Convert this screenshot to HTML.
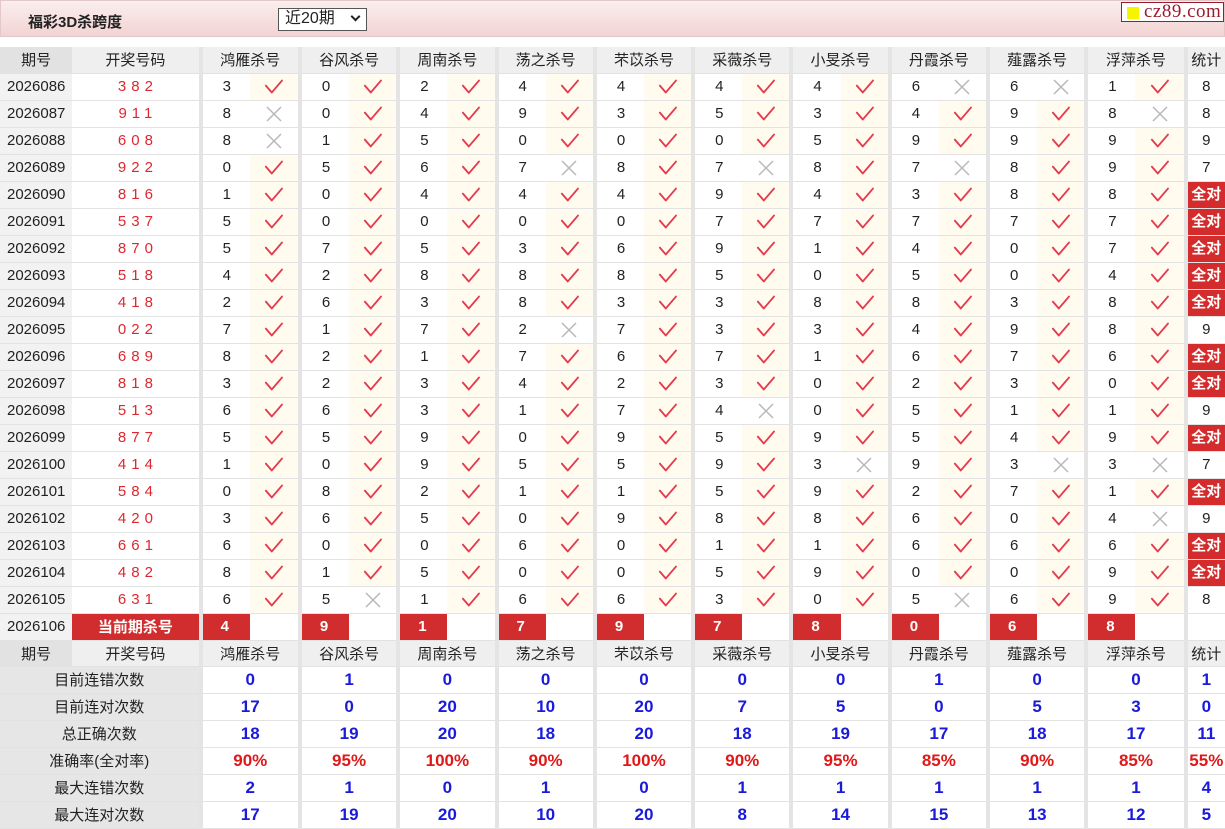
<!DOCTYPE html>
<html><head><meta charset="utf-8">
<style>
*{margin:0;padding:0;box-sizing:border-box}
body{width:1225px;height:828px;overflow:hidden;background:#fff;font-family:"Liberation Sans","Noto Sans CJK SC",sans-serif;font-size:15px;color:#222;position:relative}
.bar{position:absolute;left:0;top:0;width:1225px;height:37px;background:linear-gradient(#fbeeee,#f3d3d3);border:1px solid #e4c8c8}
.bar .t{position:absolute;left:27px;top:10px;font-weight:bold;font-size:15px;color:#222}
.bar .sel{position:absolute;left:277px;top:7px;width:89px;height:23px;border:1px solid #555;background:#fff;font-size:16px;padding-left:6px;line-height:20px}
.bar .sel i{position:absolute;right:7px;top:4px;width:7px;height:7px;border-right:2px solid #222;border-bottom:2px solid #222;transform:rotate(45deg)}
.logo{position:absolute;left:1120px;top:1px;width:103px;height:20px;border:1px solid #9b1c2c;background:#fff;font-family:"Liberation Serif",serif;font-size:19px;color:#9b1c2c;line-height:18px;padding-left:22px;letter-spacing:0.5px}
.logo b{position:absolute;left:5px;top:4px;width:12px;height:12px;background:#f5f500}
table{position:absolute;left:0;top:47px;border-collapse:collapse;table-layout:fixed;width:1225px}
td{height:27px;border-bottom:1px solid #e2e2e2;text-align:center;white-space:nowrap;overflow:hidden;padding:0}
tr.h td{height:26px;background:#efefef;font-size:15px;color:#222}
tr.h td.p{background:#e2e2e2}
td.p{background:#f2f2f2;text-align:left;padding-left:7px;font-size:15px}
tr.h td.p{text-align:center;padding:0}
td.c{color:#e0262e;letter-spacing:5px;padding-left:5px;font-size:15px}
td.n{text-align:left;padding-left:20px;border-left:4px solid #e4e4e4}
td.g{border-left:4px solid #e4e4e4}
td.y{background:#fffbee}
td.s{border-left:4px solid #e4e4e4}
td.q{border-left:4px solid #e4e4e4;background:#fff;padding:0}
td.q span{display:block;background:#d42c2c;color:#fff;font-weight:bold;height:26px;line-height:26px;font-size:15px}
svg{display:block;margin:0 auto}
tr.k td.r{background:#d12d2e;color:#fff;font-weight:bold}
tr.k td.n.r{padding-left:18px}
td.l{background:#e6e6e6;font-size:15px}
tr.st td.v{font-weight:bold;color:#1a1adb;font-size:17px;border-left:4px solid #e4e4e4}
tr.st td.v.red{color:#e01818}
</style></head><body>
<svg width="0" height="0" style="position:absolute"><defs>
<symbol id="y" viewBox="0 0 24 20"><path d="M3 9 L10 17 L22 3" fill="none" stroke="#e53a4e" stroke-width="2.2" stroke-linecap="round" stroke-linejoin="round"/></symbol>
<symbol id="x" viewBox="0 0 20 20"><path d="M3 3 L17 17 M17 3 L3 17" fill="none" stroke="#b8b8b8" stroke-width="1.5"/></symbol>
</defs></svg>
<div class="bar"><span class="t">福彩3D杀跨度</span><div class="sel">近20期<i></i></div><div class="logo"><b></b>cz89.com</div></div>
<table>
<colgroup><col style="width:72px"><col style="width:128px"><col style="width:49px"><col style="width:50px"><col style="width:49px"><col style="width:49px"><col style="width:49px"><col style="width:49px"><col style="width:49px"><col style="width:49px"><col style="width:49px"><col style="width:49px"><col style="width:49px"><col style="width:49px"><col style="width:49px"><col style="width:49px"><col style="width:49px"><col style="width:49px"><col style="width:49px"><col style="width:49px"><col style="width:49px"><col style="width:50px"><col style="width:39px"></colgroup>
<tr class="h"><td class="p">期号</td><td>开奖号码</td><td colspan="2" class="g">鸿雁杀号</td><td colspan="2" class="g">谷风杀号</td><td colspan="2" class="g">周南杀号</td><td colspan="2" class="g">荡之杀号</td><td colspan="2" class="g">芣苡杀号</td><td colspan="2" class="g">采薇杀号</td><td colspan="2" class="g">小旻杀号</td><td colspan="2" class="g">丹霞杀号</td><td colspan="2" class="g">薤露杀号</td><td colspan="2" class="g">浮萍杀号</td><td class="g">统计</td></tr>
<tr><td class="p">2026086</td><td class="c">382</td><td class="n">3</td><td class="y"><svg width="21" height="17"><use href="#y"/></svg></td><td class="n">0</td><td class="y"><svg width="21" height="17"><use href="#y"/></svg></td><td class="n">2</td><td class="y"><svg width="21" height="17"><use href="#y"/></svg></td><td class="n">4</td><td class="y"><svg width="21" height="17"><use href="#y"/></svg></td><td class="n">4</td><td class="y"><svg width="21" height="17"><use href="#y"/></svg></td><td class="n">4</td><td class="y"><svg width="21" height="17"><use href="#y"/></svg></td><td class="n">4</td><td class="y"><svg width="21" height="17"><use href="#y"/></svg></td><td class="n">6</td><td><svg width="20" height="20"><use href="#x"/></svg></td><td class="n">6</td><td><svg width="20" height="20"><use href="#x"/></svg></td><td class="n">1</td><td class="y"><svg width="21" height="17"><use href="#y"/></svg></td><td class="s">8</td></tr>
<tr><td class="p">2026087</td><td class="c">911</td><td class="n">8</td><td><svg width="20" height="20"><use href="#x"/></svg></td><td class="n">0</td><td class="y"><svg width="21" height="17"><use href="#y"/></svg></td><td class="n">4</td><td class="y"><svg width="21" height="17"><use href="#y"/></svg></td><td class="n">9</td><td class="y"><svg width="21" height="17"><use href="#y"/></svg></td><td class="n">3</td><td class="y"><svg width="21" height="17"><use href="#y"/></svg></td><td class="n">5</td><td class="y"><svg width="21" height="17"><use href="#y"/></svg></td><td class="n">3</td><td class="y"><svg width="21" height="17"><use href="#y"/></svg></td><td class="n">4</td><td class="y"><svg width="21" height="17"><use href="#y"/></svg></td><td class="n">9</td><td class="y"><svg width="21" height="17"><use href="#y"/></svg></td><td class="n">8</td><td><svg width="20" height="20"><use href="#x"/></svg></td><td class="s">8</td></tr>
<tr><td class="p">2026088</td><td class="c">608</td><td class="n">8</td><td><svg width="20" height="20"><use href="#x"/></svg></td><td class="n">1</td><td class="y"><svg width="21" height="17"><use href="#y"/></svg></td><td class="n">5</td><td class="y"><svg width="21" height="17"><use href="#y"/></svg></td><td class="n">0</td><td class="y"><svg width="21" height="17"><use href="#y"/></svg></td><td class="n">0</td><td class="y"><svg width="21" height="17"><use href="#y"/></svg></td><td class="n">0</td><td class="y"><svg width="21" height="17"><use href="#y"/></svg></td><td class="n">5</td><td class="y"><svg width="21" height="17"><use href="#y"/></svg></td><td class="n">9</td><td class="y"><svg width="21" height="17"><use href="#y"/></svg></td><td class="n">9</td><td class="y"><svg width="21" height="17"><use href="#y"/></svg></td><td class="n">9</td><td class="y"><svg width="21" height="17"><use href="#y"/></svg></td><td class="s">9</td></tr>
<tr><td class="p">2026089</td><td class="c">922</td><td class="n">0</td><td class="y"><svg width="21" height="17"><use href="#y"/></svg></td><td class="n">5</td><td class="y"><svg width="21" height="17"><use href="#y"/></svg></td><td class="n">6</td><td class="y"><svg width="21" height="17"><use href="#y"/></svg></td><td class="n">7</td><td><svg width="20" height="20"><use href="#x"/></svg></td><td class="n">8</td><td class="y"><svg width="21" height="17"><use href="#y"/></svg></td><td class="n">7</td><td><svg width="20" height="20"><use href="#x"/></svg></td><td class="n">8</td><td class="y"><svg width="21" height="17"><use href="#y"/></svg></td><td class="n">7</td><td><svg width="20" height="20"><use href="#x"/></svg></td><td class="n">8</td><td class="y"><svg width="21" height="17"><use href="#y"/></svg></td><td class="n">9</td><td class="y"><svg width="21" height="17"><use href="#y"/></svg></td><td class="s">7</td></tr>
<tr><td class="p">2026090</td><td class="c">816</td><td class="n">1</td><td class="y"><svg width="21" height="17"><use href="#y"/></svg></td><td class="n">0</td><td class="y"><svg width="21" height="17"><use href="#y"/></svg></td><td class="n">4</td><td class="y"><svg width="21" height="17"><use href="#y"/></svg></td><td class="n">4</td><td class="y"><svg width="21" height="17"><use href="#y"/></svg></td><td class="n">4</td><td class="y"><svg width="21" height="17"><use href="#y"/></svg></td><td class="n">9</td><td class="y"><svg width="21" height="17"><use href="#y"/></svg></td><td class="n">4</td><td class="y"><svg width="21" height="17"><use href="#y"/></svg></td><td class="n">3</td><td class="y"><svg width="21" height="17"><use href="#y"/></svg></td><td class="n">8</td><td class="y"><svg width="21" height="17"><use href="#y"/></svg></td><td class="n">8</td><td class="y"><svg width="21" height="17"><use href="#y"/></svg></td><td class="q"><span>全对</span></td></tr>
<tr><td class="p">2026091</td><td class="c">537</td><td class="n">5</td><td class="y"><svg width="21" height="17"><use href="#y"/></svg></td><td class="n">0</td><td class="y"><svg width="21" height="17"><use href="#y"/></svg></td><td class="n">0</td><td class="y"><svg width="21" height="17"><use href="#y"/></svg></td><td class="n">0</td><td class="y"><svg width="21" height="17"><use href="#y"/></svg></td><td class="n">0</td><td class="y"><svg width="21" height="17"><use href="#y"/></svg></td><td class="n">7</td><td class="y"><svg width="21" height="17"><use href="#y"/></svg></td><td class="n">7</td><td class="y"><svg width="21" height="17"><use href="#y"/></svg></td><td class="n">7</td><td class="y"><svg width="21" height="17"><use href="#y"/></svg></td><td class="n">7</td><td class="y"><svg width="21" height="17"><use href="#y"/></svg></td><td class="n">7</td><td class="y"><svg width="21" height="17"><use href="#y"/></svg></td><td class="q"><span>全对</span></td></tr>
<tr><td class="p">2026092</td><td class="c">870</td><td class="n">5</td><td class="y"><svg width="21" height="17"><use href="#y"/></svg></td><td class="n">7</td><td class="y"><svg width="21" height="17"><use href="#y"/></svg></td><td class="n">5</td><td class="y"><svg width="21" height="17"><use href="#y"/></svg></td><td class="n">3</td><td class="y"><svg width="21" height="17"><use href="#y"/></svg></td><td class="n">6</td><td class="y"><svg width="21" height="17"><use href="#y"/></svg></td><td class="n">9</td><td class="y"><svg width="21" height="17"><use href="#y"/></svg></td><td class="n">1</td><td class="y"><svg width="21" height="17"><use href="#y"/></svg></td><td class="n">4</td><td class="y"><svg width="21" height="17"><use href="#y"/></svg></td><td class="n">0</td><td class="y"><svg width="21" height="17"><use href="#y"/></svg></td><td class="n">7</td><td class="y"><svg width="21" height="17"><use href="#y"/></svg></td><td class="q"><span>全对</span></td></tr>
<tr><td class="p">2026093</td><td class="c">518</td><td class="n">4</td><td class="y"><svg width="21" height="17"><use href="#y"/></svg></td><td class="n">2</td><td class="y"><svg width="21" height="17"><use href="#y"/></svg></td><td class="n">8</td><td class="y"><svg width="21" height="17"><use href="#y"/></svg></td><td class="n">8</td><td class="y"><svg width="21" height="17"><use href="#y"/></svg></td><td class="n">8</td><td class="y"><svg width="21" height="17"><use href="#y"/></svg></td><td class="n">5</td><td class="y"><svg width="21" height="17"><use href="#y"/></svg></td><td class="n">0</td><td class="y"><svg width="21" height="17"><use href="#y"/></svg></td><td class="n">5</td><td class="y"><svg width="21" height="17"><use href="#y"/></svg></td><td class="n">0</td><td class="y"><svg width="21" height="17"><use href="#y"/></svg></td><td class="n">4</td><td class="y"><svg width="21" height="17"><use href="#y"/></svg></td><td class="q"><span>全对</span></td></tr>
<tr><td class="p">2026094</td><td class="c">418</td><td class="n">2</td><td class="y"><svg width="21" height="17"><use href="#y"/></svg></td><td class="n">6</td><td class="y"><svg width="21" height="17"><use href="#y"/></svg></td><td class="n">3</td><td class="y"><svg width="21" height="17"><use href="#y"/></svg></td><td class="n">8</td><td class="y"><svg width="21" height="17"><use href="#y"/></svg></td><td class="n">3</td><td class="y"><svg width="21" height="17"><use href="#y"/></svg></td><td class="n">3</td><td class="y"><svg width="21" height="17"><use href="#y"/></svg></td><td class="n">8</td><td class="y"><svg width="21" height="17"><use href="#y"/></svg></td><td class="n">8</td><td class="y"><svg width="21" height="17"><use href="#y"/></svg></td><td class="n">3</td><td class="y"><svg width="21" height="17"><use href="#y"/></svg></td><td class="n">8</td><td class="y"><svg width="21" height="17"><use href="#y"/></svg></td><td class="q"><span>全对</span></td></tr>
<tr><td class="p">2026095</td><td class="c">022</td><td class="n">7</td><td class="y"><svg width="21" height="17"><use href="#y"/></svg></td><td class="n">1</td><td class="y"><svg width="21" height="17"><use href="#y"/></svg></td><td class="n">7</td><td class="y"><svg width="21" height="17"><use href="#y"/></svg></td><td class="n">2</td><td><svg width="20" height="20"><use href="#x"/></svg></td><td class="n">7</td><td class="y"><svg width="21" height="17"><use href="#y"/></svg></td><td class="n">3</td><td class="y"><svg width="21" height="17"><use href="#y"/></svg></td><td class="n">3</td><td class="y"><svg width="21" height="17"><use href="#y"/></svg></td><td class="n">4</td><td class="y"><svg width="21" height="17"><use href="#y"/></svg></td><td class="n">9</td><td class="y"><svg width="21" height="17"><use href="#y"/></svg></td><td class="n">8</td><td class="y"><svg width="21" height="17"><use href="#y"/></svg></td><td class="s">9</td></tr>
<tr><td class="p">2026096</td><td class="c">689</td><td class="n">8</td><td class="y"><svg width="21" height="17"><use href="#y"/></svg></td><td class="n">2</td><td class="y"><svg width="21" height="17"><use href="#y"/></svg></td><td class="n">1</td><td class="y"><svg width="21" height="17"><use href="#y"/></svg></td><td class="n">7</td><td class="y"><svg width="21" height="17"><use href="#y"/></svg></td><td class="n">6</td><td class="y"><svg width="21" height="17"><use href="#y"/></svg></td><td class="n">7</td><td class="y"><svg width="21" height="17"><use href="#y"/></svg></td><td class="n">1</td><td class="y"><svg width="21" height="17"><use href="#y"/></svg></td><td class="n">6</td><td class="y"><svg width="21" height="17"><use href="#y"/></svg></td><td class="n">7</td><td class="y"><svg width="21" height="17"><use href="#y"/></svg></td><td class="n">6</td><td class="y"><svg width="21" height="17"><use href="#y"/></svg></td><td class="q"><span>全对</span></td></tr>
<tr><td class="p">2026097</td><td class="c">818</td><td class="n">3</td><td class="y"><svg width="21" height="17"><use href="#y"/></svg></td><td class="n">2</td><td class="y"><svg width="21" height="17"><use href="#y"/></svg></td><td class="n">3</td><td class="y"><svg width="21" height="17"><use href="#y"/></svg></td><td class="n">4</td><td class="y"><svg width="21" height="17"><use href="#y"/></svg></td><td class="n">2</td><td class="y"><svg width="21" height="17"><use href="#y"/></svg></td><td class="n">3</td><td class="y"><svg width="21" height="17"><use href="#y"/></svg></td><td class="n">0</td><td class="y"><svg width="21" height="17"><use href="#y"/></svg></td><td class="n">2</td><td class="y"><svg width="21" height="17"><use href="#y"/></svg></td><td class="n">3</td><td class="y"><svg width="21" height="17"><use href="#y"/></svg></td><td class="n">0</td><td class="y"><svg width="21" height="17"><use href="#y"/></svg></td><td class="q"><span>全对</span></td></tr>
<tr><td class="p">2026098</td><td class="c">513</td><td class="n">6</td><td class="y"><svg width="21" height="17"><use href="#y"/></svg></td><td class="n">6</td><td class="y"><svg width="21" height="17"><use href="#y"/></svg></td><td class="n">3</td><td class="y"><svg width="21" height="17"><use href="#y"/></svg></td><td class="n">1</td><td class="y"><svg width="21" height="17"><use href="#y"/></svg></td><td class="n">7</td><td class="y"><svg width="21" height="17"><use href="#y"/></svg></td><td class="n">4</td><td><svg width="20" height="20"><use href="#x"/></svg></td><td class="n">0</td><td class="y"><svg width="21" height="17"><use href="#y"/></svg></td><td class="n">5</td><td class="y"><svg width="21" height="17"><use href="#y"/></svg></td><td class="n">1</td><td class="y"><svg width="21" height="17"><use href="#y"/></svg></td><td class="n">1</td><td class="y"><svg width="21" height="17"><use href="#y"/></svg></td><td class="s">9</td></tr>
<tr><td class="p">2026099</td><td class="c">877</td><td class="n">5</td><td class="y"><svg width="21" height="17"><use href="#y"/></svg></td><td class="n">5</td><td class="y"><svg width="21" height="17"><use href="#y"/></svg></td><td class="n">9</td><td class="y"><svg width="21" height="17"><use href="#y"/></svg></td><td class="n">0</td><td class="y"><svg width="21" height="17"><use href="#y"/></svg></td><td class="n">9</td><td class="y"><svg width="21" height="17"><use href="#y"/></svg></td><td class="n">5</td><td class="y"><svg width="21" height="17"><use href="#y"/></svg></td><td class="n">9</td><td class="y"><svg width="21" height="17"><use href="#y"/></svg></td><td class="n">5</td><td class="y"><svg width="21" height="17"><use href="#y"/></svg></td><td class="n">4</td><td class="y"><svg width="21" height="17"><use href="#y"/></svg></td><td class="n">9</td><td class="y"><svg width="21" height="17"><use href="#y"/></svg></td><td class="q"><span>全对</span></td></tr>
<tr><td class="p">2026100</td><td class="c">414</td><td class="n">1</td><td class="y"><svg width="21" height="17"><use href="#y"/></svg></td><td class="n">0</td><td class="y"><svg width="21" height="17"><use href="#y"/></svg></td><td class="n">9</td><td class="y"><svg width="21" height="17"><use href="#y"/></svg></td><td class="n">5</td><td class="y"><svg width="21" height="17"><use href="#y"/></svg></td><td class="n">5</td><td class="y"><svg width="21" height="17"><use href="#y"/></svg></td><td class="n">9</td><td class="y"><svg width="21" height="17"><use href="#y"/></svg></td><td class="n">3</td><td><svg width="20" height="20"><use href="#x"/></svg></td><td class="n">9</td><td class="y"><svg width="21" height="17"><use href="#y"/></svg></td><td class="n">3</td><td><svg width="20" height="20"><use href="#x"/></svg></td><td class="n">3</td><td><svg width="20" height="20"><use href="#x"/></svg></td><td class="s">7</td></tr>
<tr><td class="p">2026101</td><td class="c">584</td><td class="n">0</td><td class="y"><svg width="21" height="17"><use href="#y"/></svg></td><td class="n">8</td><td class="y"><svg width="21" height="17"><use href="#y"/></svg></td><td class="n">2</td><td class="y"><svg width="21" height="17"><use href="#y"/></svg></td><td class="n">1</td><td class="y"><svg width="21" height="17"><use href="#y"/></svg></td><td class="n">1</td><td class="y"><svg width="21" height="17"><use href="#y"/></svg></td><td class="n">5</td><td class="y"><svg width="21" height="17"><use href="#y"/></svg></td><td class="n">9</td><td class="y"><svg width="21" height="17"><use href="#y"/></svg></td><td class="n">2</td><td class="y"><svg width="21" height="17"><use href="#y"/></svg></td><td class="n">7</td><td class="y"><svg width="21" height="17"><use href="#y"/></svg></td><td class="n">1</td><td class="y"><svg width="21" height="17"><use href="#y"/></svg></td><td class="q"><span>全对</span></td></tr>
<tr><td class="p">2026102</td><td class="c">420</td><td class="n">3</td><td class="y"><svg width="21" height="17"><use href="#y"/></svg></td><td class="n">6</td><td class="y"><svg width="21" height="17"><use href="#y"/></svg></td><td class="n">5</td><td class="y"><svg width="21" height="17"><use href="#y"/></svg></td><td class="n">0</td><td class="y"><svg width="21" height="17"><use href="#y"/></svg></td><td class="n">9</td><td class="y"><svg width="21" height="17"><use href="#y"/></svg></td><td class="n">8</td><td class="y"><svg width="21" height="17"><use href="#y"/></svg></td><td class="n">8</td><td class="y"><svg width="21" height="17"><use href="#y"/></svg></td><td class="n">6</td><td class="y"><svg width="21" height="17"><use href="#y"/></svg></td><td class="n">0</td><td class="y"><svg width="21" height="17"><use href="#y"/></svg></td><td class="n">4</td><td><svg width="20" height="20"><use href="#x"/></svg></td><td class="s">9</td></tr>
<tr><td class="p">2026103</td><td class="c">661</td><td class="n">6</td><td class="y"><svg width="21" height="17"><use href="#y"/></svg></td><td class="n">0</td><td class="y"><svg width="21" height="17"><use href="#y"/></svg></td><td class="n">0</td><td class="y"><svg width="21" height="17"><use href="#y"/></svg></td><td class="n">6</td><td class="y"><svg width="21" height="17"><use href="#y"/></svg></td><td class="n">0</td><td class="y"><svg width="21" height="17"><use href="#y"/></svg></td><td class="n">1</td><td class="y"><svg width="21" height="17"><use href="#y"/></svg></td><td class="n">1</td><td class="y"><svg width="21" height="17"><use href="#y"/></svg></td><td class="n">6</td><td class="y"><svg width="21" height="17"><use href="#y"/></svg></td><td class="n">6</td><td class="y"><svg width="21" height="17"><use href="#y"/></svg></td><td class="n">6</td><td class="y"><svg width="21" height="17"><use href="#y"/></svg></td><td class="q"><span>全对</span></td></tr>
<tr><td class="p">2026104</td><td class="c">482</td><td class="n">8</td><td class="y"><svg width="21" height="17"><use href="#y"/></svg></td><td class="n">1</td><td class="y"><svg width="21" height="17"><use href="#y"/></svg></td><td class="n">5</td><td class="y"><svg width="21" height="17"><use href="#y"/></svg></td><td class="n">0</td><td class="y"><svg width="21" height="17"><use href="#y"/></svg></td><td class="n">0</td><td class="y"><svg width="21" height="17"><use href="#y"/></svg></td><td class="n">5</td><td class="y"><svg width="21" height="17"><use href="#y"/></svg></td><td class="n">9</td><td class="y"><svg width="21" height="17"><use href="#y"/></svg></td><td class="n">0</td><td class="y"><svg width="21" height="17"><use href="#y"/></svg></td><td class="n">0</td><td class="y"><svg width="21" height="17"><use href="#y"/></svg></td><td class="n">9</td><td class="y"><svg width="21" height="17"><use href="#y"/></svg></td><td class="q"><span>全对</span></td></tr>
<tr><td class="p">2026105</td><td class="c">631</td><td class="n">6</td><td class="y"><svg width="21" height="17"><use href="#y"/></svg></td><td class="n">5</td><td><svg width="20" height="20"><use href="#x"/></svg></td><td class="n">1</td><td class="y"><svg width="21" height="17"><use href="#y"/></svg></td><td class="n">6</td><td class="y"><svg width="21" height="17"><use href="#y"/></svg></td><td class="n">6</td><td class="y"><svg width="21" height="17"><use href="#y"/></svg></td><td class="n">3</td><td class="y"><svg width="21" height="17"><use href="#y"/></svg></td><td class="n">0</td><td class="y"><svg width="21" height="17"><use href="#y"/></svg></td><td class="n">5</td><td><svg width="20" height="20"><use href="#x"/></svg></td><td class="n">6</td><td class="y"><svg width="21" height="17"><use href="#y"/></svg></td><td class="n">9</td><td class="y"><svg width="21" height="17"><use href="#y"/></svg></td><td class="s">8</td></tr>
<tr class="k"><td class="p">2026106</td><td class="r">当前期杀号</td><td class="n r">4</td><td></td><td class="n r">9</td><td></td><td class="n r">1</td><td></td><td class="n r">7</td><td></td><td class="n r">9</td><td></td><td class="n r">7</td><td></td><td class="n r">8</td><td></td><td class="n r">0</td><td></td><td class="n r">6</td><td></td><td class="n r">8</td><td></td><td class="s"></td></tr>
<tr class="h"><td class="p">期号</td><td>开奖号码</td><td colspan="2" class="g">鸿雁杀号</td><td colspan="2" class="g">谷风杀号</td><td colspan="2" class="g">周南杀号</td><td colspan="2" class="g">荡之杀号</td><td colspan="2" class="g">芣苡杀号</td><td colspan="2" class="g">采薇杀号</td><td colspan="2" class="g">小旻杀号</td><td colspan="2" class="g">丹霞杀号</td><td colspan="2" class="g">薤露杀号</td><td colspan="2" class="g">浮萍杀号</td><td class="g">统计</td></tr>
<tr class="st"><td colspan="2" class="l">目前连错次数</td><td colspan="2" class="v">0</td><td colspan="2" class="v">1</td><td colspan="2" class="v">0</td><td colspan="2" class="v">0</td><td colspan="2" class="v">0</td><td colspan="2" class="v">0</td><td colspan="2" class="v">0</td><td colspan="2" class="v">1</td><td colspan="2" class="v">0</td><td colspan="2" class="v">0</td><td class="v">1</td></tr>
<tr class="st"><td colspan="2" class="l">目前连对次数</td><td colspan="2" class="v">17</td><td colspan="2" class="v">0</td><td colspan="2" class="v">20</td><td colspan="2" class="v">10</td><td colspan="2" class="v">20</td><td colspan="2" class="v">7</td><td colspan="2" class="v">5</td><td colspan="2" class="v">0</td><td colspan="2" class="v">5</td><td colspan="2" class="v">3</td><td class="v">0</td></tr>
<tr class="st"><td colspan="2" class="l">总正确次数</td><td colspan="2" class="v">18</td><td colspan="2" class="v">19</td><td colspan="2" class="v">20</td><td colspan="2" class="v">18</td><td colspan="2" class="v">20</td><td colspan="2" class="v">18</td><td colspan="2" class="v">19</td><td colspan="2" class="v">17</td><td colspan="2" class="v">18</td><td colspan="2" class="v">17</td><td class="v">11</td></tr>
<tr class="st"><td colspan="2" class="l">准确率(全对率)</td><td colspan="2" class="v red">90%</td><td colspan="2" class="v red">95%</td><td colspan="2" class="v red">100%</td><td colspan="2" class="v red">90%</td><td colspan="2" class="v red">100%</td><td colspan="2" class="v red">90%</td><td colspan="2" class="v red">95%</td><td colspan="2" class="v red">85%</td><td colspan="2" class="v red">90%</td><td colspan="2" class="v red">85%</td><td class="v red">55%</td></tr>
<tr class="st"><td colspan="2" class="l">最大连错次数</td><td colspan="2" class="v">2</td><td colspan="2" class="v">1</td><td colspan="2" class="v">0</td><td colspan="2" class="v">1</td><td colspan="2" class="v">0</td><td colspan="2" class="v">1</td><td colspan="2" class="v">1</td><td colspan="2" class="v">1</td><td colspan="2" class="v">1</td><td colspan="2" class="v">1</td><td class="v">4</td></tr>
<tr class="st"><td colspan="2" class="l">最大连对次数</td><td colspan="2" class="v">17</td><td colspan="2" class="v">19</td><td colspan="2" class="v">20</td><td colspan="2" class="v">10</td><td colspan="2" class="v">20</td><td colspan="2" class="v">8</td><td colspan="2" class="v">14</td><td colspan="2" class="v">15</td><td colspan="2" class="v">13</td><td colspan="2" class="v">12</td><td class="v">5</td></tr>
</table>
</body></html>
